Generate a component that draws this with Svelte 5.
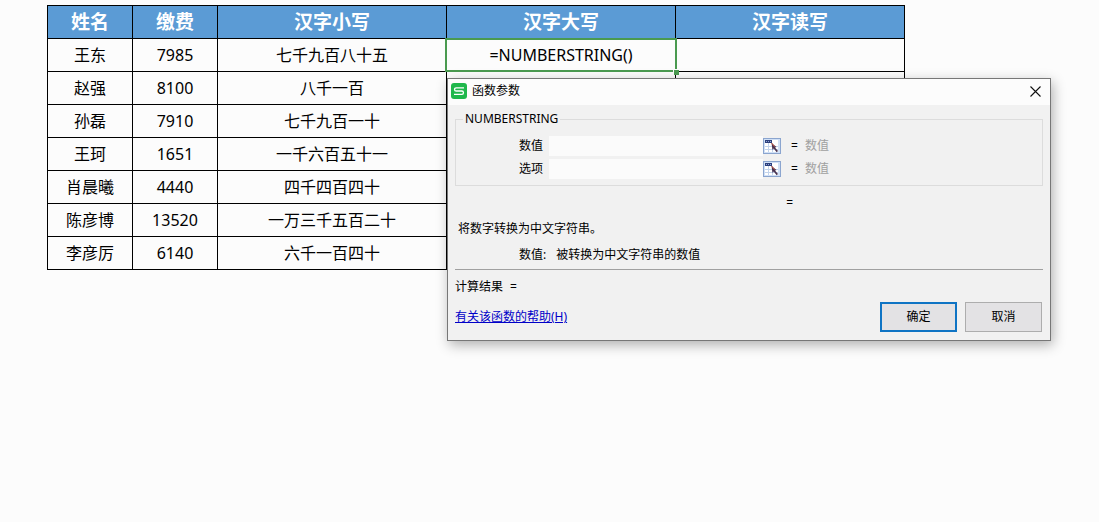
<script lang="ts">
    const headers = ['姓名', '缴费', '汉字小写', '汉字大写', '汉字读写']

    const rows = [
        { name: '王东', fee: 7985, lower: '七千九百八十五' },
        { name: '赵强', fee: 8100, lower: '八千一百' },
        { name: '孙磊', fee: 7910, lower: '七千九百一十' },
        { name: '王珂', fee: 1651, lower: '一千六百五十一' },
        { name: '肖晨曦', fee: 4440, lower: '四千四百四十' },
        { name: '陈彦博', fee: 13520, lower: '一万三千五百二十' },
        { name: '李彦厉', fee: 6140, lower: '六千一百四十' }
    ]

    const fields = [
        { id: 'value', label: '数值' },
        { id: 'option', label: '选项' }
    ]

    let args: Record<string, string> = $state({ value: '', option: '' })
</script>

<main>
    <table>
        <colgroup>
            <col class="narrow" />
            <col class="narrow" />
            <col />
            <col />
            <col />
        </colgroup>
        <thead>
            <tr>
                {#each headers as header}
                    <th>{header}</th>
                {/each}
            </tr>
        </thead>
        <tbody>
            {#each rows as row, i}
                <tr>
                    <td>{row.name}</td>
                    <td>{row.fee}</td>
                    <td>{row.lower}</td>
                    {#if i === 0}
                        <td class="active">=NUMBERSTRING()<i class="frame"></i><i class="handle"></i></td>
                    {:else}
                        <td></td>
                    {/if}
                    <td></td>
                </tr>
            {/each}
        </tbody>
    </table>

    <div class="dialog" role="dialog" aria-labelledby="title">
        <header>
            <svg class="logo" viewBox="0 0 16 16" aria-hidden="true">
                <rect width="16" height="16" rx="3" fill="#1fb74b" />
                <path d="M13 4.8H5.2c-2.2 0-2.2 3.2 0 3.2h5.6c2.2 0 2.2 3.3 0 3.3H3" fill="none" stroke="#fff" stroke-width="1.3" />
            </svg>
            <span id="title">函数参数</span>
            <button class="close" aria-label="关闭">
                <svg viewBox="0 0 11 11"><path d="M.5.5l10 10M10.5.5l-10 10" stroke="#111" stroke-width="1.1" /></svg>
            </button>
        </header>

        <div class="body">
            <fieldset>
                <legend>NUMBERSTRING</legend>
                {#each fields as field}
                    <div class="field">
                        <label for={field.id}>{field.label}</label>
                        <input id={field.id} type="text" autocomplete="off" bind:value={args[field.id]} />
                        <button class="picker" aria-label="选择区域">
                            <svg viewBox="0 0 18 16">
                                <rect x=".5" y=".5" width="17" height="15" fill="#d0e0f6" stroke="#8ba5cf" />
                                <rect x="2" y="2" width="13" height="12" fill="#fff" />
                                <path d="M2 8.5h13M2 11.5h13M5.5 5v9M9.5 5v9" stroke="#c3d4ec" />
                                <rect x="2" y="2" width="7" height="3" fill="#2c3f7c" />
                                <path d="M3 3.5h5" stroke="#8fa5d5" stroke-dasharray="1 1" />
                                <path d="M8.5 5l5 4-1.5.6 3 3.4-1.3 1.2-3-3.6-1.2 1.4z" fill="#4a3350" />
                                <path d="M8.5 5l3 3.5" stroke="#c7543d" />
                            </svg>
                        </button>
                        <span class="eq">=</span>
                        <span class="kind">数值</span>
                    </div>
                {/each}
            </fieldset>

            <div class="result"><span>=</span></div>
            <p class="about">将数字转换为中文字符串。</p>
            <p class="hint"><span>数值:</span><span>被转换为中文字符串的数值</span></p>
            <div class="total"><span>计算结果</span><span>=</span></div>

            <footer>
                <a href="#help">有关该函数的帮助(H)</a>
                <button class="ok">确定</button>
                <button>取消</button>
            </footer>
        </div>
    </div>
</main>

<style>
    :global(body){margin:0;background:#fcfcfc;}
    main{position:relative;box-sizing:border-box;min-height:100vh;padding:5px 194px 0 47px;font-family:"Noto Sans","Noto Sans CJK SC",sans-serif;color:#000;}

    table{width:100%;border-collapse:collapse;table-layout:fixed;font-size:16px;line-height:24px;}
    .narrow{width:85px;}
    th,td{height:32px;padding:0;border:1px solid #000;text-align:center;white-space:nowrap;}
    th{background:#5b9bd5;color:#fff;font-size:19px;font-weight:bold;}
    .active{position:relative;}
    .frame{position:absolute;inset:-1px -2px -1px -2px;border:2px solid #4a9a50;}
    .handle{position:absolute;right:-4px;bottom:-4px;width:5px;height:5px;background:#4a9a50;border:solid #fcfcfc;border-width:1px 0 0 1px;}

    .dialog{position:absolute;top:78px;left:447px;right:48px;border:1px solid #777;background:#f1f1f1;box-shadow:2px 4px 12px rgba(0,0,0,0.3);font-size:12px;line-height:18px;}
    header{display:flex;align-items:center;height:24px;padding:0 9px 2px 3px;gap:5px;background:#fcfcfc;}
    .logo{width:16px;height:16px;}
    .close{margin-left:auto;padding:0;border:none;background:none;display:flex;}
    .close svg{width:11px;height:11px;}

    .body{padding:5px 7px 8px;}
    fieldset{margin:0;padding:8px 0 6px;border:1px solid #dcdcdc;min-width:0;}
    legend{margin-left:7px;padding:0 2px;}
    .field{display:flex;align-items:center;height:20px;}
    .field + .field{margin-top:3px;}
    label{width:87px;margin-right:6px;text-align:right;}
    input{flex:1;min-width:0;height:20px;box-sizing:border-box;padding:0 4px;border:none;background:#fbfbfb;font:inherit;}
    input:focus{outline:1px solid #0078d7;}
    .picker{width:18px;height:16px;padding:0;border:none;background:none;display:flex;}
    .eq{width:14px;margin-left:10px;}
    .kind{width:237px;color:#a0a0a0;}

    .result{display:flex;justify-content:flex-end;padding:8px 250px 0 0;}
    p{margin:0;}
    .about{padding:8px 3px 0;}
    .hint{display:flex;gap:10px;padding:8px 0 5px 64px;border-bottom:1px solid #a0a0a0;}
    .total{display:flex;gap:7px;padding-top:8px;}
    footer{display:flex;align-items:center;gap:8px;padding:6px 1px 0 0;}
    footer a{margin-right:auto;color:#0000c8;}
    footer button{width:77px;height:30px;padding:0;border:1px solid #adadad;background:#e3e2e4;color:#000;font:inherit;}
    footer .ok{border:2px solid #0f74c4;}
</style>
